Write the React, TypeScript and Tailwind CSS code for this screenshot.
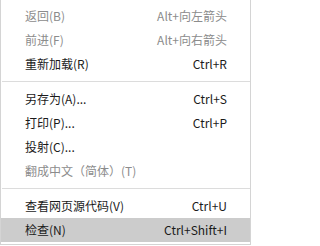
type Item = { label: string; shortcut?: string; disabled?: boolean; active?: boolean };

const groups: Item[][] = [
  [
    { label: "返回(B)", shortcut: "Alt+向左箭头", disabled: true },
    { label: "前进(F)", shortcut: "Alt+向右箭头", disabled: true },
    { label: "重新加载(R)", shortcut: "Ctrl+R" },
  ],
  [
    { label: "另存为(A)...", shortcut: "Ctrl+S" },
    { label: "打印(P)...", shortcut: "Ctrl+P" },
    { label: "投射(C)..." },
    { label: "翻成中文（简体）(T)", disabled: true },
  ],
  [
    { label: "查看网页源代码(V)", shortcut: "Ctrl+U" },
    { label: "检查(N)", shortcut: "Ctrl+Shift+I", active: true },
  ],
];

function MenuRow({ item }: { item: Item }) {
  return (
    <div
      className={
        "flex h-6 items-center justify-between pl-6 pr-[23px] " +
        (item.active ? "bg-[#cccccc] " : "") +
        (item.disabled ? "text-[#8c8c8c]" : "text-[#1a1a1a]")
      }
    >
      <span>{item.label}</span>
      {item.shortcut && <span>{item.shortcut}</span>}
    </div>
  );
}

export default function App() {
  return (
    <div className="h-[246px] w-[252px] bg-white">
      <div
        className="w-[251px] border-x border-b border-[#d4d4d4] pt-1 pb-[2px] text-[12px] leading-none"
        style={{ fontFamily: '"Segoe UI", "Noto Sans CJK SC", sans-serif' }}
      >
        {groups.map((group, gi) => (
          <div key={gi}>
            {gi > 0 && (
              <div className="py-[5px] pl-px">
                <div className="h-px bg-[#dcdcdc]" />
              </div>
            )}
            {group.map((item) => (
              <MenuRow key={item.label} item={item} />
            ))}
          </div>
        ))}
      </div>
    </div>
  );
}
